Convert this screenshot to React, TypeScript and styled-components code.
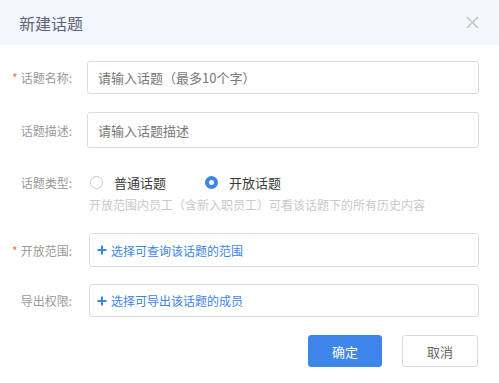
import React from 'react';
import styled, { createGlobalStyle } from 'styled-components';

const GlobalStyle = createGlobalStyle`
  html, body {
    margin: 0;
    padding: 0;
    background: #fff;
  }
  body {
    font-family: "Noto Sans CJK SC", "Noto Sans", sans-serif;
    color: #333;
  }
  * {
    box-sizing: border-box;
  }
`;

const Dialog = styled.div`
  width: 499px;
  height: 383px;
  background: #fff;
  display: flex;
  flex-direction: column;
`;

const Header = styled.div`
  height: 45px;
  flex: none;
  background: #f3f6fc;
  display: flex;
  align-items: center;
  justify-content: space-between;
  padding: 0 20px 0 19px;
`;

const Title = styled.div`
  font-size: 16px;
  color: #5e6577;
  line-height: 1;
`;

const CloseButton = styled.button`
  border: 0;
  background: none;
  padding: 0;
  width: 14px;
  height: 14px;
  display: flex;
  align-items: center;
  justify-content: center;
  cursor: pointer;
`;

const Body = styled.div`
  padding: 0 20px 0 0;
  display: flex;
  flex-direction: column;
`;

const Row = styled.div<{ $top: number; $height: number }>`
  display: flex;
  align-items: center;
  margin-top: ${(p) => p.$top}px;
  height: ${(p) => p.$height}px;
`;

const Label = styled.div`
  width: 87px;
  flex: none;
  padding-right: 15px;
  text-align: right;
  font-size: 12px;
  color: #999;
  white-space: nowrap;
`;

const Star = styled.span`
  color: #f46b5c;
  margin-right: 3px;
`;

const Input = styled.input`
  flex: 1;
  height: 100%;
  border: 1px solid #dcdcdc;
  border-radius: 3px;
  padding: 0 10px;
  font-family: inherit;
  font-size: 13px;
  color: #333;
  outline: none;
  &::placeholder {
    color: #777;
  }
`;

const Field = styled.div`
  flex: 1;
  height: 100%;
  display: flex;
  flex-direction: column;
  margin-left: 2px;
`;

const RadioGroup = styled.div`
  display: flex;
  align-items: center;
  height: 100%;
  margin-left: 1px;
`;

const RadioOption = styled.label`
  display: flex;
  align-items: center;
  font-size: 13px;
  color: #3a3a3a;
  margin-right: 39px;
  cursor: pointer;
`;

const RadioDot = styled.span<{ $checked?: boolean }>`
  width: 13px;
  height: 13px;
  border-radius: 50%;
  margin-right: 11px;
  flex: none;
  border: ${(p) => (p.$checked ? '4px solid #3d85e8' : '1px solid #c8c8c8')};
  background: #fff;
`;

const Hint = styled.div`
  margin-top: 5px;
  margin-left: 89px;
  font-size: 12px;
  line-height: 16px;
  color: #c9c9c9;
  white-space: nowrap;
`;

const PickBox = styled.div`
  flex: 1;
  height: 100%;
  border: 1px solid #dcdcdc;
  border-radius: 3px;
  margin-left: 2px;
  display: flex;
  align-items: center;
  padding-left: 7px;
  font-size: 12px;
  color: #3d85e8;
  cursor: pointer;
`;

const Plus = styled.svg`
  width: 10px;
  height: 10px;
  margin-right: 4px;
  flex: none;
`;

const Footer = styled.div`
  display: flex;
  justify-content: flex-end;
  gap: 20px;
  margin-top: 18px;
  padding-right: 1px;
`;

const Button = styled.button<{ $primary?: boolean }>`
  height: 32px;
  width: ${(p) => (p.$primary ? 74 : 76)}px;
  border-radius: 3px;
  font-family: inherit;
  font-size: 13px;
  cursor: pointer;
  border: 1px solid ${(p) => (p.$primary ? '#3d85e8' : '#d9d9d9')};
  background: ${(p) => (p.$primary ? '#3d85e8' : '#fff')};
  color: ${(p) => (p.$primary ? '#fff' : '#666')};
`;

const PlusIcon = () => (
  <Plus viewBox="0 0 10 10">
    <path d="M5 0.5v9M0.5 5h9" stroke="#3d85e8" strokeWidth="2" />
  </Plus>
);

export default function App() {
  return (
    <>
      <GlobalStyle />
      <Dialog>
        <Header>
          <Title>新建话题</Title>
          <CloseButton aria-label="close">
            <svg width="13" height="13" viewBox="0 0 13 13">
              <path d="M1 1l11 11M12 1L1 12" stroke="#c4c4c4" strokeWidth="1.6" />
            </svg>
          </CloseButton>
        </Header>
        <Body>
          <Row $top={16} $height={33}>
            <Label>
              <Star>*</Star>话题名称:
            </Label>
            <Input placeholder="请输入话题（最多10个字）" />
          </Row>
          <Row $top={18} $height={36}>
            <Label>话题描述:</Label>
            <Input placeholder="请输入话题描述" />
          </Row>
          <Row $top={24} $height={20}>
            <Label>话题类型:</Label>
            <Field>
              <RadioGroup>
                <RadioOption>
                  <RadioDot />
                  普通话题
                </RadioOption>
                <RadioOption>
                  <RadioDot $checked />
                  开放话题
                </RadioOption>
              </RadioGroup>
            </Field>
          </Row>
          <Hint>开放范围内员工（含新入职员工）可看该话题下的所有历史内容</Hint>
          <Row $top={20} $height={34}>
            <Label>
              <Star>*</Star>开放范围:
            </Label>
            <PickBox>
              <PlusIcon />
              选择可查询该话题的范围
            </PickBox>
          </Row>
          <Row $top={17} $height={33}>
            <Label>导出权限:</Label>
            <PickBox>
              <PlusIcon />
              选择可导出该话题的成员
            </PickBox>
          </Row>
          <Footer>
            <Button $primary>确定</Button>
            <Button>取消</Button>
          </Footer>
        </Body>
      </Dialog>
    </>
  );
}
